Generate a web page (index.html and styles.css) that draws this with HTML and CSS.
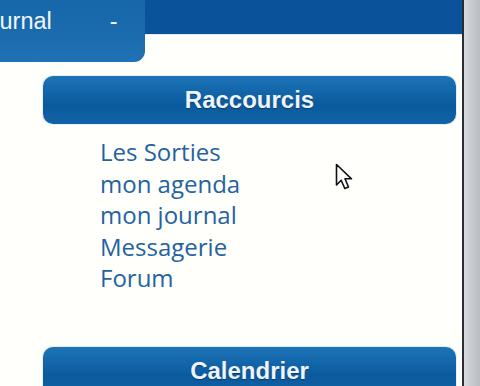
FILE: index.html
```html
<!DOCTYPE html>
<html lang="fr">
<head>
<meta charset="utf-8">
<title>Raccourcis</title>
<link rel="stylesheet" href="styles.css">
</head>
<body>
<div class="screen">
  <div class="page">
    <div class="topbar">
      <div class="tab"><span class="tab-label">mon journal</span><span class="tab-dash">-</span></div>
    </div>
    <div class="content">
      <div class="block">
        <div class="block-head">Raccourcis</div>
        <ul class="links">
          <li><a href="#">Les Sorties</a></li>
          <li><a href="#">mon agenda</a></li>
          <li><a href="#">mon journal</a></li>
          <li><a href="#">Messagerie</a></li>
          <li><a href="#">Forum</a></li>
        </ul>
      </div>
      <div class="block">
        <div class="block-head">Calendrier</div>
      </div>
    </div>
    <svg class="cursor" width="21" height="29" viewBox="0 0 21 29">
      <path d="M1.5 1.5 L1.5 22 L6.2 17.3 L9.8 25.5 L13.5 24 L10 15.8 L16.5 15.8 Z" fill="#fff" stroke="#111" stroke-width="1.6" stroke-linejoin="round"/>
    </svg>
  </div>
  <div class="edge"></div>
  <div class="gutter"></div>
</div>
</body>
</html>
```

FILE: styles.css
```css
html, body {
  margin: 0;
  padding: 0;
  background: #fffffb;
}
.screen {
  display: flex;
  width: 480px;
  height: 386px;
  overflow: hidden;
}
.page {
  position: relative;
  flex: 0 0 462px;
  background: #fffffb;
  overflow: hidden;
}
.edge {
  flex: 0 0 2px;
  background: #2b2e33;
}
.gutter {
  flex: 1;
  background: linear-gradient(to right, #d9dcdf 0%, #c9cdd1 40%, #b9bdc2 100%);
}
.topbar {
  height: 34px;
  background: #0a539b;
  display: flex;
  border-bottom: 1px solid #dfe9f3;
}
.tab {
  flex: 0 0 auto;
  box-sizing: border-box;
  width: 216px;
  height: 62px;
  margin-left: -71px;
  border-bottom-right-radius: 11px;
  background: linear-gradient(to bottom, #1667aa 0%, #1a6cae 60%, #1f72b5 100%);
  display: flex;
  align-items: flex-start;
  padding-top: 8px;
  font-family: "Liberation Sans", Arial, sans-serif;
  font-size: 23.5px;
  color: #f2f6fa;
}
.tab-label {
  white-space: nowrap;
}
.tab-dash {
  margin-left: 58px;
}
.content {
  padding: 41px 6px 0 43px;
}
.block-head {
  height: 48px;
  border-radius: 10px;
  background: linear-gradient(to bottom, #1c74b6 0%, #1367aa 30%, #0b5a9e 60%, #1162a6 100%);
  box-shadow: 0 0 0 1px #e6eef5;
  display: flex;
  align-items: center;
  justify-content: center;
  font-family: "Liberation Sans", Arial, sans-serif;
  font-weight: bold;
  font-size: 24px;
  color: #eef4fa;
  text-shadow: 0 1px 1px rgba(0, 0, 0, 0.35);
}
.links {
  list-style: none;
  margin: 12px 0 53px 0;
  padding: 0 0 0 57px;
  font-family: "Open Sans", "DejaVu Sans", sans-serif;
  font-size: 24px;
  line-height: 31.5px;
}
.links a {
  color: #2462a2;
  text-decoration: none;
}
.cursor {
  position: absolute;
  left: 335px;
  top: 163px;
}
```
